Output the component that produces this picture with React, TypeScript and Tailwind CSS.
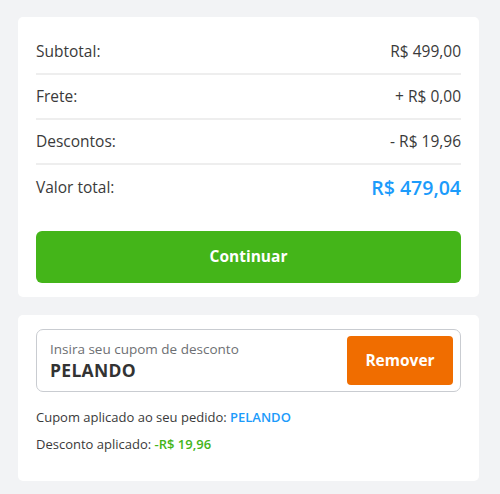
import React from 'react';

const rows = [
  { label: 'Subtotal:', value: 'R$ 499,00' },
  { label: 'Frete:', value: '+ R$ 0,00' },
  { label: 'Descontos:', value: '- R$ 19,96' },
];

const App: React.FC = () => {
  return (
    <div
      className="w-[500px] h-[494px] bg-[#f2f3f5] pt-[17px] pl-[18px] pr-[21px] text-[#3a3a3a]"
      style={{ fontFamily: '"Open Sans", "Liberation Sans", sans-serif' }}
    >
      {/* Summary */}
      <section className="bg-white rounded-[5px] px-[18px] pt-[13px] pb-[14px]">
        {rows.map((r) => (
          <div key={r.label} className="h-[45px] flex items-center justify-between border-b-2 border-[#eeeeee] text-[15.5px]">
            <span>{r.label}</span>
            <span>{r.value}</span>
          </div>
        ))}
        <div className="h-[46px] flex items-center justify-between">
          <span className="text-[15.5px]">Valor total:</span>
          <span className="text-[19.5px] font-semibold text-[#1c9bfb]">R$ 479,04</span>
        </div>
        <button className="mt-[20px] w-full h-[52px] rounded-[6px] bg-[#44b519] text-white text-[15.5px] font-bold">
          Continuar
        </button>
      </section>

      {/* Coupon */}
      <section className="mt-[18px] bg-white rounded-[5px] px-[18px] pt-[14px] pb-[28px]">
        <div className="h-[63px] border border-[#c9ccd1] rounded-[7px] flex items-center justify-between pl-[13px] pr-[7px]">
          <div className="flex flex-col">
            <span className="text-[13.5px] text-[#6d6f73] leading-[18px]">Insira seu cupom de desconto</span>
            <span className="text-[17.5px] font-bold text-[#333] leading-[24px] tracking-[0.3px]">PELANDO</span>
          </div>
          <button className="w-[106px] h-[49px] rounded-[4px] bg-[#f06d00] text-white text-[15.5px] font-bold">
            Remover
          </button>
        </div>
        <p className="mt-[16px] text-[13px] leading-[18px]">
          Cupom aplicado ao seu pedido: <span className="font-semibold text-[#1c9bfb]">PELANDO</span>
        </p>
        <p className="mt-[9px] text-[13px] leading-[18px]">
          Desconto aplicado: <span className="font-semibold text-[#44b519]">-R$ 19,96</span>
        </p>
      </section>
    </div>
  );
};

export default App;
